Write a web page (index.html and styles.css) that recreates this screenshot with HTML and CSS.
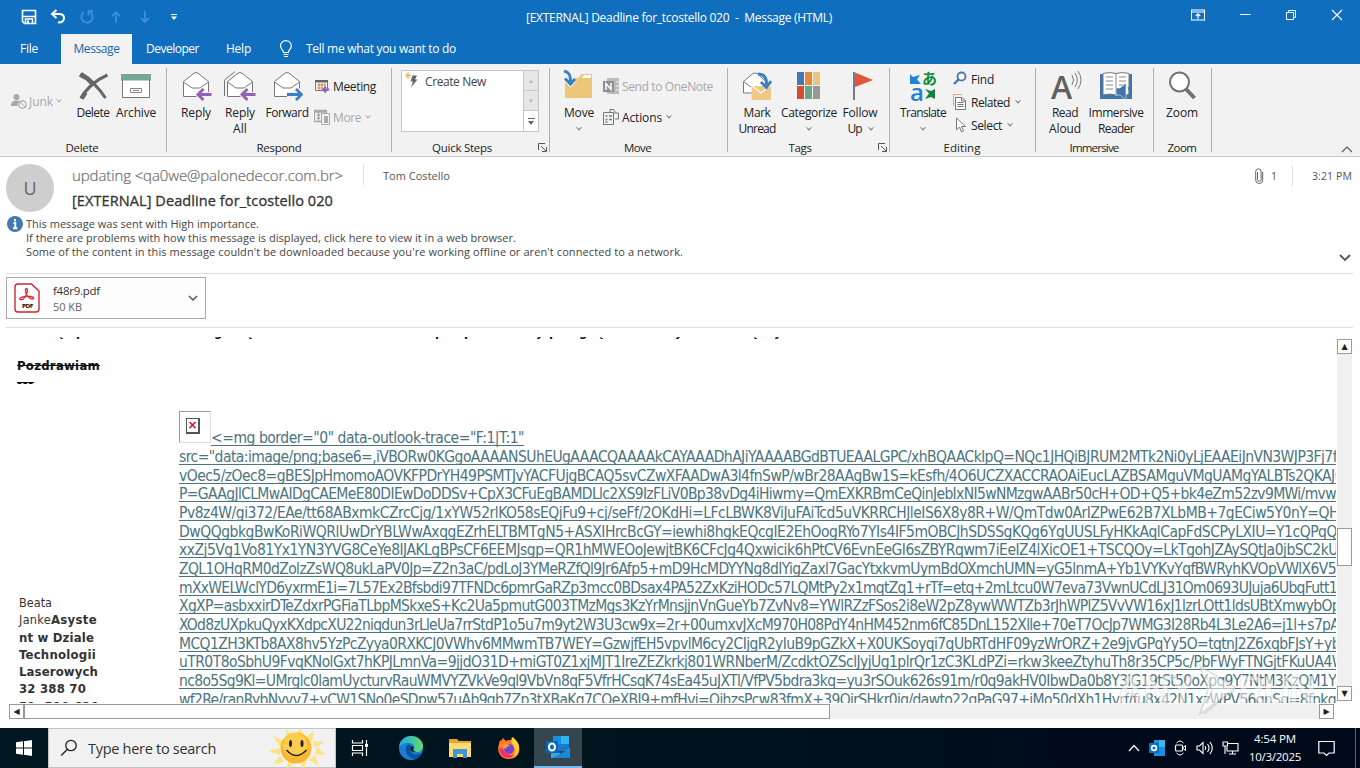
FILE: index.html
```html
<!DOCTYPE html>
<html lang="en">
<head>
<meta charset="utf-8">
<title>[EXTERNAL] Deadline for_tcostello 020 - Message (HTML)</title>
<link rel="stylesheet" href="styles.css">
</head>
<body>
<div class="screen">
  <header class="titlebar">
    <div class="quick">
      <svg width="16" height="16" viewBox="0 0 16 16"><path d="M1.500 1.500h13v13h-11l-2-2z" fill="none" stroke="#fff" stroke-width="1.600"/><path d="M2 7.500h12M4.500 14v-4h7v4" fill="none" stroke="#fff" stroke-width="1.500"/><path d="M6 11.500h2v2.500h-2z" fill="#fff"/></svg>
      <svg width="16" height="16" viewBox="0 0 16 16"><path d="M6.500 1L2 5l4.500 4M2.500 5h6.500c3.500 0 5 1.700 5 4s-1.500 4.500-6 4.500" fill="none" stroke="#fff" stroke-width="2"/></svg>
      <svg class="dim" width="16" height="16" viewBox="0 0 16 16"><path d="M5 3a5.700 5.700 0 1 0 6 0M14 2h-4.500v4.500" fill="none" stroke="#52a3e6" stroke-width="1.800"/></svg>
      <svg class="dim" width="16" height="16" viewBox="0 0 16 16"><path d="M8 14V3M4 7l4-4 4 4" fill="none" stroke="#52a3e6" stroke-width="1.800"/></svg>
      <svg class="dim" width="16" height="16" viewBox="0 0 16 16"><path d="M8 2v11M4 9l4 4 4-4" fill="none" stroke="#52a3e6" stroke-width="1.800"/></svg>
      <svg width="16" height="16" viewBox="0 0 16 16"><path d="M5 5.500h6" stroke="#fff"/><path d="M5 7.500h6l-3 3.500z" fill="#fff"/></svg>
    </div>
    <div class="window-title"><span data-w="306">[EXTERNAL] Deadline for_tcostello 020&nbsp; -&nbsp; Message (HTML)</span></div>
    <div class="window-buttons">
      <svg width="14" height="12" viewBox="0 0 14 12"><path d="M.5 1h13v10H.5zM.5 3h13M7 10V5M4.700 7L7 4.800 9.300 7" fill="none" stroke="#fff" stroke-width="1.100"/></svg>
      <svg width="12" height="12" viewBox="0 0 12 12"><path d="M1 5.500h10.500" stroke="#fff"/></svg>
      <svg width="12" height="12" viewBox="0 0 12 12"><path d="M1.500 3.500h7v7h-7zM3.500 3.500v-2h7v7h-2" fill="none" stroke="#fff"/></svg>
      <svg width="12" height="12" viewBox="0 0 12 12"><path d="M1 1l10 10M11 1L1 11" stroke="#fff" stroke-width="1.100"/></svg>
    </div>
  </header>

  <nav class="tabs">
    <div class="tab file"><span data-w="18">File</span></div>
    <div class="tab on"><span data-w="46">Message</span></div>
    <div class="tab dev"><span data-w="53">Developer</span></div>
    <div class="tab help"><span data-w="25">Help</span></div>
    <div class="tell">
      <svg width="14" height="18" viewBox="0 0 14 18"><path d="M4.500 12.500c0-2.500-3-3.500-3-6.500a5.400 5.400 0 0 1 10.800 0c0 3-3 4-3 6.500zM4.500 14.500h5M5 16.500h4" fill="none" stroke="#fff" stroke-width="1.200"/></svg>
      <span data-w="150">Tell me what you want to do</span>
    </div>
  </nav>

  <section class="ribbon">
    <div class="group g-delete">
      <div class="tools">
        <div class="small junk off"><svg width="16" height="16" viewBox="0 0 16 16"><circle cx="5.500" cy="4" r="3" fill="#a9a9a9"/><path d="M0 13c0-4 2-5.500 5.500-5.500 1.500 0 2.500.3 3.300.8A5 5 0 0 0 6.500 13z" fill="#a9a9a9"/><circle cx="11.500" cy="11.500" r="3.700" fill="#f2f2f2" stroke="#a9a9a9" stroke-width="1.200"/><path d="M9 9l5 5" stroke="#a9a9a9"/></svg><span data-w="24">Junk</span><i class="chev"></i></div>
        <div class="big w42"><svg width="32" height="32" viewBox="0 0 32 32"><path d="M4.500 3.500c9 6 17 14 24 24.500M30.500 5C19 10 9.500 18 4 28.500" fill="none" stroke="#666" stroke-width="3"/><path d="M3 4.500l7.500 4L17 15M4.500 28.500l4-6" fill="none" stroke="#666" stroke-width="4.600"/></svg><span data-w="33">Delete</span></div>
        <div class="big w44"><svg width="32" height="32" viewBox="0 0 32 32"><path d="M2.500 9v18.500h27V9" fill="#fff" stroke="#777"/><path d="M1 4h30v6.500H1z" fill="#74a892"/><path d="M10.500 18.500h11v4h-11zM13 20.500h6" fill="none" stroke="#888"/></svg><span data-w="40">Archive</span></div>
      </div>
      <div class="name"><span data-w="33">Delete</span></div>
    </div>
    <div class="group g-respond">
      <div class="tools">
        <div class="big w44"><svg width="32" height="32" viewBox="0 0 32 32"><path d="M3.500 11.500L14 3.200q2-1.400 4 0l10.500 8.300V26.500h-25z" fill="#fff" stroke="#777"/><path d="M3.500 12l8.500 6h8l8.500-6" fill="none" stroke="#777"/><path d="M31 24.500H19M24 18.500l-6 6 6 6" fill="none" stroke="#f2f2f2" stroke-width="5"/><path d="M31.500 24.500H18.500M23.500 19l-5.500 5.500 5.500 5.500" fill="none" stroke="#9161b8" stroke-width="2.800"/></svg><span data-w="30">Reply</span></div>
        <div class="big w44"><svg width="32" height="32" viewBox="0 0 32 32"><path d="M.5 26V10L11 1.500" fill="none" stroke="#777"/><path d="M3.500 11.500L14 3.200q2-1.400 4 0l10.500 8.300V26.500h-25z" fill="#fff" stroke="#777"/><path d="M3.500 12l8.500 6h8l8.500-6" fill="none" stroke="#777"/><path d="M31 24.500H19M24 18.500l-6 6 6 6" fill="none" stroke="#f2f2f2" stroke-width="5"/><path d="M31.500 24.500H18.500M23.500 19l-5.500 5.500 5.500 5.500" fill="none" stroke="#9161b8" stroke-width="2.800"/></svg><span data-w="30">Reply</span><span data-w="14">All</span></div>
        <div class="big w50"><svg width="32" height="32" viewBox="0 0 32 32"><path d="M3.500 11.500L14 3.200q2-1.400 4 0l10.500 8.300V26.500h-25z" fill="#fff" stroke="#777"/><path d="M3.500 12l8.500 6h8l8.500-6" fill="none" stroke="#777"/><path d="M16 24.500h13M25 18.500l6 6-6 6" fill="none" stroke="#f2f2f2" stroke-width="5"/><path d="M16 24.500h14M25 19l5.500 5.500-5.500 5.500" fill="none" stroke="#3f7fc1" stroke-width="2.800"/></svg><span data-w="43">Forward</span></div>
        <div class="stack two">
          <div class="small"><svg width="16" height="16" viewBox="0 0 16 16"><path d="M1.500 2.500h12v10h-12z" fill="#fff" stroke="#777"/><path d="M1 2h13v2.500H1z" fill="#666"/><path d="M3 7h8M3 10h5M5 5v7M8 5v7M11 5v3" stroke="#c98145"/><path d="M15.500 11.500H9M12 8.500l-3 3 3 3" fill="none" stroke="#9161b8" stroke-width="1.800"/></svg><span data-w="43">Meeting</span></div>
          <div class="small off"><svg width="16" height="16" viewBox="0 0 16 16"><path d="M.5 1.500h12v11H.5zM1 3h11M3 6h3M3 9h3M4.500 3v9" fill="none" stroke="#aaa" stroke-width="1.300"/><path d="M7.500 4.500h8v11h-8z" fill="#f2f2f2" stroke="#aaa"/><path d="M10 7h4v7h-4z" fill="#aaa"/></svg><span data-w="28">More</span><i class="chev"></i></div>
        </div>
      </div>
      <div class="name"><span data-w="45">Respond</span></div>
    </div>
    <div class="group g-quick">
      <div class="tools">
        <div class="gallery">
          <div class="gallery-item"><svg width="16" height="16" viewBox="0 0 16 16"><path d="M3 0v7M0 3.500h6.500M.8 1l4.600 5M5.400 1L.8 6" stroke="#e5a54b" stroke-width=".8"/><path d="M7.500 3.500H12l-2 4h2.500L6 15.500l2-6H5.500z" fill="#666"/></svg><span data-w="61">Create New</span></div>
          <div class="gallery-scroll"><b>▲</b><b>▼</b><b class="more"></b></div>
        </div>
      </div>
      <div class="name"><span data-w="60">Quick Steps</span></div>
      <svg class="launch" width="9" height="9" viewBox="0 0 9 9"><path d="M.5 7V.5H7M3 3l5 5M8.500 4v4.500H4" fill="none" stroke="#555"/></svg>
    </div>
    <div class="group g-move">
      <div class="tools">
        <div class="big w44"><svg width="32" height="32" viewBox="0 0 32 32"><path d="M2 8h13l4-4h10v8H2z" fill="#ecc679"/><path d="M19 8l2-3h7v3z" fill="#fff"/><path d="M2 8h27v20H2z" fill="#ecc679"/><path d="M1 1c5 1 7 4 6.500 12M2 8.500l5.500 5.500L12 9" fill="none" stroke="#f2f2f2" stroke-width="5"/><path d="M1 1c5 1 7 4 6.500 12M2 8.500l5.500 5.500L12 9" fill="none" stroke="#3f7fc1" stroke-width="3"/></svg><span data-w="30">Move</span><i class="chev"></i></div>
        <div class="stack two">
          <div class="small off"><svg width="16" height="16" viewBox="0 0 16 16"><path d="M4 0h12v16H4z" fill="#bbb"/><path d="M13 4h3M13 8h3M13 12h3" stroke="#eee"/><path d="M0 3h11v11H0z" fill="#8f8f8f"/><path d="M3 12V5.500l5 6V5" fill="none" stroke="#fff" stroke-width="1.500"/></svg><span data-w="91">Send to OneNote</span></div>
          <div class="small"><svg width="16" height="16" viewBox="0 0 16 16"><path d="M.5 3.500h10v12H.5zM7 3V.5h4M11 4h4.500v6H12M10 .5l3 3" fill="none" stroke="#777"/><path d="M2.500 7h2M6 7h3M2.500 10.500h2M6 10.500h3M2.500 13h2" stroke="#777" stroke-width="1.300"/></svg><span data-w="40">Actions</span><i class="chev"></i></div>
        </div>
      </div>
      <div class="name"><span data-w="27">Move</span></div>
    </div>
    <div class="group g-tags">
      <div class="tools">
        <div class="big w44"><svg width="32" height="32" viewBox="0 0 32 32"><path d="M2.500 11.500L12 3.500q2-1 4 0l9 8V23h-22.500z" fill="#fff" stroke="#777"/><path d="M3 12l7 5" stroke="#777"/><path d="M10.500 16h19.500V30H10.500z" fill="#eec983"/><path d="M10 15l10 8 10-8" fill="none" stroke="#fff" stroke-width="1.200"/><path d="M17 4c7 0 9 5 8.500 12M20 12l5.500 5.500L30 11" fill="none" stroke="#3f7fc1" stroke-width="3"/></svg><span data-w="27">Mark</span><span data-w="37">Unread</span></div>
        <div class="big w60"><svg width="32" height="32" viewBox="0 0 32 32"><path d="M4 2h7v13H4z" fill="#4478b5"/><path d="M12 2h7v13h-7z" fill="#e48839"/><path d="M20 2h7v13h-7z" fill="#e9c483"/><path d="M4 16h7v13H4z" fill="#d84b31"/><path d="M12 16h7v13h-7z" fill="#69a389"/><path d="M20 16h7v13h-7z" fill="#979797"/></svg><span data-w="56">Categorize</span><i class="chev"></i></div>
        <div class="big w42"><svg width="32" height="32" viewBox="0 0 32 32"><path d="M10 2v28" stroke="#7b7b7b" stroke-width="2"/><path d="M11 2.500L29 10 11 17z" fill="#e35637"/></svg><span data-w="35">Follow</span><div class="row"><span data-w="14">Up</span><i class="chev"></i></div></div>
      </div>
      <div class="name"><span data-w="23">Tags</span></div>
      <svg class="launch" width="9" height="9" viewBox="0 0 9 9"><path d="M.5 7V.5H7M3 3l5 5M8.500 4v4.500H4" fill="none" stroke="#555"/></svg>
    </div>
    <div class="group g-edit">
      <div class="tools">
        <div class="big w52"><div class="translate"><svg width="32" height="32" viewBox="0 0 32 32"><path d="M3 4l3 3 7-2-3 4.500 4 4.500H3z" fill="#1c83dc"/><path d="M28 29V19l-4 2-6-2 4 4.500-4 5.500 6-2z" fill="#17803d"/></svg><b>a</b><em>あ</em></div><span data-w="46">Translate</span><i class="chev"></i></div>
        <div class="stack three">
          <div class="small"><svg width="16" height="16" viewBox="0 0 16 16"><circle cx="8.500" cy="5.500" r="4" fill="#fff" stroke="#4478b5" stroke-width="1.800"/><path d="M5.500 8.500L1 13" stroke="#4478b5" stroke-width="2.400"/></svg><span data-w="23">Find</span></div>
          <div class="small"><svg width="16" height="16" viewBox="0 0 16 16"><path d="M.5 12V.5H9" fill="none" stroke="#e9a86a"/><path d="M2.500 3.500h6l4 3v9h-10zM8.500 3.500v3.500h4M4.500 8.500h6M4.500 10.500h6M4.500 12.500h6" fill="#fff" stroke="#777"/></svg><span data-w="39">Related</span><i class="chev"></i></div>
          <div class="small"><svg width="16" height="16" viewBox="0 0 16 16"><path d="M3.500 1v12l3-3 2 5 2-1-2-4.500h4z" fill="#fff" stroke="#777"/></svg><span data-w="31">Select</span><i class="chev"></i></div>
        </div>
      </div>
      <div class="name"><span data-w="37">Editing</span></div>
    </div>
    <div class="group g-immersive">
      <div class="tools">
        <div class="big w48"><div class="aloud"><b>A</b><svg width="11" height="20" viewBox="0 0 11 20"><path d="M1 5q3 5 0 10M4 3q4.500 7 0 14M7 1q6 9 0 18" fill="none" stroke="#777"/></svg></div><span data-w="26">Read</span><span data-w="32">Aloud</span></div>
        <div class="big w54"><svg width="32" height="32" viewBox="0 0 32 32"><path d="M0 4h3v20h11l2 2 2-2h11V4h3v25H0z" fill="#3f76b0"/><path d="M3 3.500q7-2 13 0 6-2 13 0V25q-7-2-13 0-6-2-13 0z" fill="#fff" stroke="#777"/><path d="M16 4v20M6 7h7M6 11h7M6 15h7M6 19h7M19 7h7M19 11h7M19 15h4" stroke="#888"/><path d="M16 18h4l6-5v17l-6-5h-4z" fill="#3f76b0" stroke="#f2f2f2" stroke-width=".6"/><path d="M28 17q3 4.500 0 9M30 14q4 7 0 15" fill="none" stroke="#3f76b0" stroke-width="1.200"/></svg><span data-w="55">Immersive</span><span data-w="36">Reader</span></div>
      </div>
      <div class="name"><span data-w="49">Immersive</span></div>
    </div>
    <div class="group g-zoom">
      <div class="tools">
        <div class="big w44"><svg width="32" height="32" viewBox="0 0 32 32"><circle cx="13.500" cy="12" r="9.500" fill="#fff" stroke="#707070" stroke-width="2"/><path d="M20 19l8.500 9" stroke="#707070" stroke-width="4"/></svg><span data-w="32">Zoom</span></div>
      </div>
      <div class="name"><span data-w="29">Zoom</span></div>
    </div>
    <svg class="collapse" width="12" height="7" viewBox="0 0 12 7"><path d="M1 6l5-5 5 5" fill="none" stroke="#555" stroke-width="1.100"/></svg>
  </section>

  <section class="head">
    <div class="head-main">
      <div class="avatar">U</div>
      <div class="who">
        <div class="from"><span class="sender" data-w="271">updating &lt;qa0we@palonedecor.com.br&gt;</span><i class="bar"></i><span class="to" data-w="67">Tom Costello</span></div>
        <div class="subject"><span data-w="261">[EXTERNAL] Deadline for_tcostello 020</span></div>
      </div>
      <div class="meta">
        <svg width="9" height="16" viewBox="0 0 9 16"><path d="M2.500 4v7.500a1.800 1.800 0 0 0 3.600 0V3.500a2.700 2.700 0 0 0-5.400 0V12a3.500 3.500 0 0 0 7 0V4" fill="none" stroke="#666"/></svg>
        <span>1</span><i class="bar"></i><span data-w="40">3:21 PM</span>
      </div>
    </div>
    <div class="info">
      <svg width="16" height="16" viewBox="0 0 16 16"><circle cx="8" cy="8" r="8" fill="#4379b1"/><path d="M8 3v2.200M6.500 7h1.800v5M6 12.200h4.300" fill="none" stroke="#fff" stroke-width="1.900"/></svg>
      <div class="info-lines">
        <div><span data-w="233">This message was sent with High importance.</span></div>
        <div><span data-w="490">If there are problems with how this message is displayed, click here to view it in a web browser.</span></div>
        <div><span data-w="657">Some of the content in this message couldn't be downloaded because you're working offline or aren't connected to a network.</span></div>
      </div>
      <svg class="expand" width="12" height="8" viewBox="0 0 12 8"><path d="M1 1l5 5 5-5" fill="none" stroke="#555" stroke-width="1.800"/></svg>
    </div>
  </section>

  <section class="attachments">
    <div class="attachment">
      <svg width="26" height="30" viewBox="0 0 26 30"><path d="M4 1h13.500L25 8v18q0 3-3 3H4q-3 0-3-3V4q0-3 3-3z" fill="#fff" stroke="#c8282d" stroke-width="1.400"/><path d="M6 16.500c-1.500-2 6-4 11-3 4 1 3 3 .5 2.300-3-1-5.500-4-6-8-.3-3 2.200-3 2 0-.3 3.500-4 10.500-7.500 8.700z" fill="none" stroke="#d5363a" stroke-width="1.400"/></svg>
      <div class="att-text"><span data-w="47">f48r9.pdf</span><span class="size" data-w="29">50 KB</span></div>
      <svg width="10" height="7" viewBox="0 0 10 7"><path d="M1 1l4 4 4-4" fill="none" stroke="#555" stroke-width="1.500"/></svg>
      <b class="pdf" data-w="11">PDF</b>
    </div>
  </section>

  <main class="reader">
    <div class="mail-row">
      <div class="mail">
        <div class="cut-line"><b class="c1">ę</b><b class="c2">p</b><b class="c3">g</b><b class="c4">ę</b><b class="c5">p</b><b class="c6">p</b><b class="c7">y</b><b class="c8">p</b><b class="c9">g</b><b class="c10">ę</b><b class="c11">y</b><b class="c12">ę</b><b>y</b></div>
        <div class="bye"><s data-w="83">Pozdrawiam</s></div>
        <div class="bye dash"><s data-w="17">---</s></div>
        <div class="cols">
          <div class="sign">
            <div><span data-w="33">Beata</span></div>
            <div><span data-w="78">Janke<b>Asyste</b></span></div>
            <div><b data-w="75">nt w Dziale</b></div>
            <div><b data-w="77">Technologii</b></div>
            <div><b data-w="79">Laserowych</b></div>
            <div><b data-w="67">32 388 70</b></div>
            <div><b data-w="80">51, 510 620</b></div>
          </div>
          <div class="link">
            <div class="first"><span class="broken"><i>×</i></span><a data-w="313">&lt;=mg border="0" data-outlook-trace="F:1|T:1"</a></div>
            <div><a data-w="1158">src="data:image/png;base6=,iVBORw0KGgoAAAANSUhEUgAAACQAAAAkCAYAAADhAJiYAAAABGdBTUEAALGPC/xhBQAACklpQ=NQc1JHQiBJRUM2MTk2Ni0yLjEAAEiJnVN3WJP3Fj7f</a></div>
            <div><a data-w="1164">vOec5/zOec8=gBESJpHmomoAOVKFPDrYH49PSMTJvYACFUjgBCAQ5svCZwXFAADwA3l4fnSwP/wBr28AAgBw1S=kEsfh/4O6UCZXACCRAOAiEucLAZBSAMguVMgUAMgYALBTs2QKAJ0</a></div>
            <div><a data-w="1157">P=GAAgJlCLMwAIDgCAEMeE80DIEwDoDDSv+CpX3CFuEgBAMDLlc2XS9IzFLiV0Bp38vDg4iHiwmy=QmEXKRBmCeQinJebIxNI5wNMzgwAABr50cH+OD+Q5+bk4eZm52zv9MWi/mvw</a></div>
            <div><a data-w="1160">Pv8z4W/gi372/EAe/tt68ABxmkCZrcCjg/1xYW52rlKO58sEQjFu9+cj/seFf/2OKdHi=LFcLBWK8ViJuFAiTcd5uVKRRCHJleIS6X8y8R+W/QmTdw0ArIZPwE62B7XLbMB+7gECiw5Y0nY=QH</a></div>
            <div><a data-w="1158">DwQQgbkgBwKoRiWQRlUwDrYBLWwAxqgEZrhELTBMTgN5+ASXIHrcBcGY=iewhi8hgkEQcgIE2EhOogRYo7YIs4IF5mOBCJhSDSSgKQg6YgUUSLFyHKkAqlCapFdSCPyLXIU=Y1cQPqQ</a></div>
            <div><a data-w="1159">xxZj5Vg1Vo81Yx1YN3YVG8CeYe8IJAKLgBPsCF6EEMJsgp=QR1hMWEOoJewjtBK6CFcJg4Qxwicik6hPtCV6EvnEeGI6sZBYRqwm7iEeIZ4lXicOE1+TSCQOy=LkTgohJZAySQtJa0jbSC2kU</a></div>
            <div><a data-w="1157">ZQL1OHqRM0dZolzZsWQ8ukLaPV0Jp=Z2n3aC/pdLoJ3YMeRZfQl9Jr6Afp5+mD9HcMDYYNg8dIYigZaxl7GacYtxkvmUymBdOXmchUMN=yG5lnmA+Yb1VYKvYqfBWRyhKVOpVWlX6V5</a></div>
            <div><a data-w="1158">mXxWELWclYD6yxrmE1i=7L57Ex2Bfsbdi97TFNDc6pmrGaRZp3mcc0BDsax4PA52ZxKziHODc57LQMtPy2x1mqtZq1+rTf=etq+2mLtcu0W7eva73VwnUCdLJ31Om0693UJuja6UbqFutt1</a></div>
            <div><a data-w="1161">XgXP=asbxxirDTeZdxrPGFiaTLbpMSkxeS+Kc2Ua5pmutG003TMzMgs3KzYrMnsjjnVnGueYb7ZvNv8=YWlRZzFSos2i8eW2pZ8ywWWTZb3rJhWPlZ5VvVW16xJ1lzrLOtt1ldsUBtXmwybOp</a></div>
            <div><a data-w="1160">XOd8zUXpkuQyxKXdpcXU22niqdun3rLleUa7rrStdP1o5u7m9yt2W3U3cw9x=2r+00umxvJXcM970H08PdY4nHM452nm6fC85DnL152Xlle+70eT7OcJp7WMG3I28Rb4L3Le2A6=j1l+s7pA</a></div>
            <div><a data-w="1161">MCQ1ZH3KTb8AX8hv5YzPcZyya0RXKCJ0VWhv6MMwmTB7WEY=GzwjfEH5vpvlM6cy2CIjgR2yIuB9pGZkX+X0UKSoyqi7qUbRTdHF09yzWrORZ+2e9jvGPqYy5O=tqtnJ2Z6xqbFJsY+yb</a></div>
            <div><a data-w="1166">uTR0T8oSbhU9FvqKNolGxt7hKPJLmnVa=9jjdO31D+miGT0Z1xjMJT1IreZEZkrkj801WRNberM/ZcdktOZSclJyjUg1plrQr1zC3KLdPZi=rkw3keeZtyhuTh8r35CP5c/PbFWyFTNGjtFKuUA4W</a></div>
            <div><a data-w="1157">nc8o5Sg9Kl=UMrglc0lamUycturvRauWMVYZVkVe9ql9VbVn8qF5VfrHCsqK74sEa45uJXTl/VfPV5bdra3kq=yu3rSOuk626s91m/r0q9akHV0IbwDa0b8Y3lG19tSt50oXpq9Y7NtM3KzQM1Y</a></div>
            <div><a data-w="1157">wf2Re/ranRybNyvv7+yCW1SNo0eSDpw57uAb9gb7Zp3tXBaKg7CQeXBJ9+mfHvj=QihzsPcw83fmX+39QjrSHkr0jq/dawto22gPaG97+jMo50dXh1Hvrf/fu8x42N1xzWPV56gnSg=8fnkg</a></div>
          </div>
        </div>
      </div>
      <div class="vscroll"><b>▲</b><i></i><b>▼</b></div>
    </div>
    <div class="hscroll"><b>◀</b><i></i><b>▶</b></div>
    <div class="watermark"><span data-w="78">ANY</span><svg width="48" height="56" viewBox="0 0 48 56"><path d="M8 4l36 22L8 52l8-24zM14 13l6 15-5 14M12 52l30-24" fill="#fff8" stroke="#8884" stroke-width="1.500"/></svg><span data-w="76">RUN</span></div>
  </main>

  <footer class="taskbar">
    <div class="start"><svg width="16" height="16" viewBox="0 0 16 16"><path d="M0 2.300L7 1.300v6.300H0zM8 1.200L16 0v7.600H8zM0 8.500h7v6.300l-7-1zM8 8.500h8V16l-8-1.200z" fill="#fff"/></svg></div>
    <div class="search">
      <svg width="18" height="18" viewBox="0 0 18 18"><circle cx="11" cy="6.500" r="5.200" fill="none" stroke="#222" stroke-width="1.300"/><path d="M7.200 10.500L1.200 16.500" stroke="#222" stroke-width="1.300"/></svg>
      <span data-w="128">Type here to search</span>
      <svg class="sun" width="58" height="40" viewBox="0 0 58 40"><g fill="#ffe37d"><path d="M18 1l8 8-6 4zM32 0l5 10-9-2zM46 3l-2 11-6-5zM56 14l-9 6-2-7zM58 27l-11-1 2-7zM51 38l-10-6 6-5zM36 41l-5-9 8-1zM18 41l3-10 6 4zM5 36l7-8 4 6zM0 23l12-3v7zM5 8l11 5-4 6z"/></g><circle cx="28" cy="20" r="15.500" fill="#f7b733"/><circle cx="27" cy="17" r="12" fill="#ffcd4e"/><ellipse cx="22.500" cy="15.500" rx="1.500" ry="3.500" fill="#222"/><ellipse cx="34" cy="15.500" rx="1.500" ry="3.500" fill="#222"/><path d="M18.500 22q9.500 11 20 0" fill="none" stroke="#222" stroke-width="1.500"/></svg>
    </div>
    <div class="app"><svg width="18" height="18" viewBox="0 0 18 18"><path d="M1.500 1v3h10V1M1.500 6.500h10v5h-10zM1.500 17v-3h10v3M15.500 1v4M15.500 8.500V17" fill="none" stroke="#fff" stroke-width="1.200"/><path d="M14 5h3v3h-3z" fill="#fff"/></svg></div>
    <div class="app edge"><svg width="24" height="24" viewBox="0 0 24 24"><defs><linearGradient id="e1" x1="0" x2="1"><stop stop-color="#22a7e8"/><stop offset="1" stop-color="#61db6c"/></linearGradient></defs><circle cx="12" cy="12" r="12" fill="#1680d8"/><path d="M0 11C1 4 6 0 12 0c7 0 12 5 12 10 0 4-3 6-6 6-4 0-4-2-3-3 1-3-1-6-5-6C5 7 1 9 0 11z" fill="url(#e1)"/><path d="M9 8.500C4 12 7 22 16 23c3-1 5-3 6.500-6-3 2-8 2-10-.5-2-2.500-1-4-.5-5C12 9 11 8 9 8.500z" fill="#0c519d"/><path d="M12 11c1-1.500 3-.5 2.500 1.500-1 2 .5 3 2.500 3.200-3 1-7-1-5-4.700z" fill="#001620"/></svg></div>
    <div class="app folder"><svg width="22" height="20" viewBox="0 0 22 20"><path d="M0 1h8l2 2h12v16H0z" fill="#e6a629"/><path d="M0 5h22v14H0z" fill="#ffda70"/><path d="M4 11h14v9h-4v-4H8v4H4z" fill="#3c97d4"/></svg></div>
    <div class="app fox"><svg width="24" height="24" viewBox="0 0 24 24"><path d="M4 5l2-3 3 3c2-1 4-1 6-1l1-3c2 2 4 4 5 7 4 8-1 15-9 15S-1 16 2 8l1-4z" fill="#ff7b27"/><path d="M15 1c3 2 5 4 6.500 7 2 7-2 13-7.500 14 5-4 5-9 2-13-2-3-2-5-1-8z" fill="#ffd23c"/><path d="M2 12c0 8 9 13 16 7-5 1-11-1-12-6z" fill="#f12c68"/><circle cx="12" cy="13" r="5" fill="#7444d3"/><path d="M5 8c3-1 7 0 8 2-3 0-4 1-4 3-2-1-4-2-4-5z" fill="#ff9d2c"/></svg></div>
    <div class="app active"><svg width="26" height="24" viewBox="0 0 26 24"><path d="M8 1h16v15H8z" fill="#167bce"/><path d="M8 1h8v8H8z" fill="#1492df"/><path d="M16 1h8v8h-8z" fill="#32b6ed"/><path d="M6 13l10 6 9-6v10H6z" fill="#35a8e6"/><path d="M7 23L25 14v9z" fill="#168ad9"/><path d="M1 6h12v12H1z" fill="#0866b6"/><ellipse cx="7" cy="12" rx="3" ry="3.500" fill="none" stroke="#fff" stroke-width="2"/></svg></div>
    <div class="tray">
      <svg width="12" height="8" viewBox="0 0 12 8"><path d="M1 7l5-5.500L11 7" fill="none" stroke="#fff" stroke-width="1.200"/></svg>
      <svg width="16" height="16" viewBox="0 0 16 16"><path d="M5 0h11v16H5z" fill="#1b91dc"/><path d="M10 0h6v7h-6z" fill="#36b9ef"/><path d="M0 3h10v10H0z" fill="#0b6fc0"/><circle cx="5" cy="8" r="2.400" fill="none" stroke="#fff" stroke-width="1.600"/></svg>
      <svg width="13" height="16" viewBox="0 0 13 16"><path d="M2.500 3q3.500-4 7 0M2.500 13q3.500 4 7 0" fill="none" stroke="#fff"/><rect x="1.500" y="5" width="7" height="6" rx="1" fill="none" stroke="#fff" stroke-width="1.200"/><path d="M8.500 8l3-2.500v5z" fill="none" stroke="#fff"/></svg>
      <svg width="17" height="14" viewBox="0 0 17 14"><path d="M1 5h2.500L7 1.500v11L3.500 9H1zM9 5q1.500 2 0 4M11.500 3q3 4 0 8M14 1q4.500 6 0 12" fill="none" stroke="#fff" stroke-width="1.100"/></svg>
      <svg width="17" height="14" viewBox="0 0 17 14"><path d="M6 2.500h10v7.500H5V6M10.500 10v3M7 13h7M1 1h4.500v4H1zM3 5v8" fill="none" stroke="#fff" stroke-width="1.100"/></svg>
      <div class="clock"><span data-w="42">4:54 PM</span><span data-w="52">10/3/2025</span></div>
      <svg width="17" height="17" viewBox="0 0 17 17"><path d="M.8 1.500h15.400v11.500H11L8.500 15.500 6 13H.8z" fill="none" stroke="#fff" stroke-width="1.200"/></svg>
      <i class="peek"></i>
    </div>
  </footer>
</div>
<script src="fit.js"></script>
</body>
</html>
```
FILE: fit.js
```js
// Tracks each label in or out so that it takes up its design width.
document.querySelectorAll('[data-w]').forEach(function (el) {
  var want = parseFloat(el.dataset.w);
  var range = document.createRange();
  range.selectNodeContents(el);
  var have = range.getBoundingClientRect().width;
  el.style.letterSpacing = (want - have) / el.textContent.length + 'px';
});
```
FILE: styles.css
```css
* { box-sizing: border-box; }
body { margin: 0; font-family: "Open Sans", "Noto Sans", sans-serif; font-size: 12px; color: #222; }
svg { display: block; flex: none; }
span, a, s, b { white-space: nowrap; }
i { font-style: normal; }
.screen { width: 1360px; height: 768px; display: flex; flex-direction: column; background: #fff; overflow: hidden; }

.titlebar { height: 34px; background: #106ebe; color: #fff; display: grid; grid-template-columns: 526px 1fr auto; flex: none; }
.quick { display: flex; gap: 13px; padding: 9px 0 0 21px; }
.dim { opacity: .65; }
.window-title { padding-top: 10px; line-height: 16px; }
.window-buttons { display: flex; gap: 34px; padding: 9px 17px 0 0; }

.tabs { height: 30px; background: #106ebe; color: #fff; display: flex; flex: none; line-height: 30px; }
.tab { display: flex; justify-content: center; }
.file { width: 61px; padding-right: 3px; }
.on { width: 71px; background: #f2f2f2; color: #1766b0; }
.dev { width: 81px; }
.help { width: 51px; }
.tell { display: flex; align-items: center; gap: 13px; padding-left: 15px; }

.ribbon { height: 93px; flex: none; background: #f2f2f2; border-bottom: 1px solid #c8c8c8; display: flex; padding-top: 4px; position: relative; }
.group { height: 84px; border-right: 1px solid #b1b1b1; display: flex; flex-direction: column; position: relative; }
.tools { height: 72px; flex: none; padding-top: 2px; display: flex; }
.name { text-align: center; line-height: 16px; font-size: 11.500px; }
.g-delete { width: 167px; padding-left: 8px; }
.g-delete .name { padding-right: 10px; }
.g-respond { width: 225px; padding-left: 7px; }
.g-respond .name { padding-right: 7px; }
.g-quick { width: 158px; padding-left: 9px; }
.g-quick .name { padding-right: 26px; }
.g-move { width: 178px; padding-left: 7px; }
.g-move .name { padding-right: 9px; }
.g-tags { width: 162px; padding-left: 7px; }
.g-tags .name { padding-right: 24px; }
.g-edit { width: 146px; padding-left: 7px; }
.g-edit .name { padding-right: 8px; }
.g-immersive { width: 118px; padding-left: 5px; }
.g-immersive .name { padding-right: 6px; }
.g-zoom { width: 58px; padding-left: 6px; }
.g-zoom .name { padding-right: 7px; }
.big { display: flex; flex-direction: column; align-items: center; line-height: 16px; font-size: 12px; }
.big > svg, .translate, .aloud { margin-bottom: 3px; }
.w42 { width: 42px; } .w44 { width: 44px; } .w48 { width: 48px; } .w50 { width: 50px; }
.w52 { width: 52px; } .w54 { width: 54px; } .w60 { width: 60px; }
.small { display: flex; align-items: center; gap: 3px; height: 16px; }
.small .chev { margin-left: 2px; }
.off { color: #a8a8a8; }
.junk { width: 64px; margin-top: 23px; padding-left: 3px; gap: 2px; }
.stack { display: flex; flex-direction: column; padding-left: 2px; }
.stack.two { gap: 15px; padding-top: 8px; }
.stack.three { gap: 7px; padding: 1px 0 0 4px; }
.stack.three .small { gap: 2px; }
.stack.three .chev { margin-left: 4px; }
.chev { width: 4px; height: 4px; border: solid #777; border-width: 0 1px 1px 0; transform: rotate(45deg) translate(-1px, -1px); flex: none; }
.off .chev { border-color: #aaa; }
.big > .chev { margin-top: 6px; }
.row { display: flex; align-items: center; gap: 7px; }
.gallery { width: 138px; height: 62px; border: 1px solid #c6c6c6; background: #fff; display: flex; justify-content: space-between; }
.gallery-item { display: flex; gap: 4px; padding: 1px 0 0 3px; color: #444; }
.gallery-item span { line-height: 20px; }
.gallery-scroll { width: 15px; display: grid; grid-template-rows: 20px 20px 1fr; }
.gallery-scroll b { background: #e6e6e6; border: 1px solid #c6c6c6; border-width: 0 0 1px 1px; color: #b4b4b4; font-size: 6px; text-align: center; line-height: 20px; }
.gallery-scroll .more { background: #fff; border-bottom: 0; display: flex; flex-direction: column; align-items: center; padding-top: 7px; gap: 2px; }
.more::before { content: ""; width: 7px; height: 1px; background: #666; }
.more::after { content: ""; border: 3.500px solid transparent; border-top: 4px solid #666; border-bottom: 0; }
.launch { position: absolute; right: 2px; bottom: 0; }
.collapse { position: absolute; right: 7px; bottom: 3px; }
.translate { width: 32px; height: 32px; position: relative; font-family: "Open Sans", "Noto Sans CJK JP", sans-serif; }
.translate b { position: absolute; left: 3px; top: 13px; font-size: 24px; line-height: 18px; color: #1c83dc; font-weight: 600; }
.translate em { position: absolute; left: 15px; top: 1px; font-size: 15px; line-height: 15px; color: #128b38; font-style: normal; font-weight: 700; }
.aloud { width: 32px; height: 32px; display: flex; padding-left: 2px; }
.aloud b { font-size: 32px; line-height: 34px; width: 20px; color: #606060; font-family: "Open Sans", sans-serif; font-weight: 600; }

.head { height: 116px; flex: none; padding: 7px 7px 0 6px; color: #444; }
.head-main { height: 53px; display: flex; }
.avatar { width: 48px; height: 48px; border-radius: 50%; background: #cecece; color: #666; font-size: 18px; line-height: 48px; text-align: center; }
.who { padding-left: 18px; flex: 1; }
.from { display: flex; align-items: center; height: 23px; }
.sender { font-size: 15px; line-height: 20px; margin-top: -2px; color: #6b6b6b; font-weight: 300; width: 271px; -webkit-text-stroke: .2px; }
.bar { width: 1px; height: 20px; background: #dedede; margin: -2px 19px 0 20px; }
.to { font-size: 11px; color: #555; }
.subject { font-size: 14.500px; line-height: 26px; padding-top: 1px; color: #333; -webkit-text-stroke: .3px; }
.meta { display: flex; align-items: center; height: 23px; font-size: 10.500px; color: #555; gap: 7px; margin-right: 1px; }
.meta .bar { margin: 0 12px 0 8px; }
.info { display: flex; font-size: 11px; line-height: 14px; gap: 3px; padding: 0 2px 0 1px; }
.info > svg { margin-top: -1px; }
.info-lines { flex: 1; }
.info .expand { margin-top: 37px; }

.attachments { margin: 0 7px 0 6px; height: 55px; flex: none; border: solid #dedede; border-width: 1px 0; padding-top: 3px; }
.attachment { width: 200px; height: 42px; border: 1px solid #ababab; background: #fdfdfd; display: flex; align-items: center; padding: 0 7px; position: relative; font-size: 11.500px; color: #333; }
.att-text { flex: 1; padding: 2px 0 0 13px; line-height: 16px; display: flex; flex-direction: column; align-items: flex-start; }
.size { font-size: 11px; color: #666; }
.pdf { position: absolute; left: 15px; top: 24px; font-size: 5.500px; line-height: 8px; color: #111; font-family: "DejaVu Sans", sans-serif; }

.reader { height: 400px; flex: none; padding-top: 9px; position: relative; }
.mail-row { display: flex; height: 366px; }
.mail { width: 1336px; overflow: hidden; padding-left: 17px; font-family: "DejaVu Sans Condensed", "DejaVu Sans", sans-serif; font-stretch: condensed; }
.cut-line { display: flex; height: 3px; font-size: 13px; line-height: 16px; padding-left: 39px; align-items: flex-end; color: #111; }
.cut-line b { flex: none; width: 20px; }
.c2.c2 { width: 138px; } .c3.c3 { width: 31px; } .c4.c4 { width: 190px; } .c5.c5 { width: 29px; } .c6.c6 { width: 72px; }
.c7.c7 { width: 13px; } .c8.c8 { width: 30px; } .c9.c9 { width: 17px; } .c10.c10 { width: 79px; } .c11.c11 { width: 75px; } .c12.c12 { width: 24px; }
.bye { font-size: 13px; line-height: 18px; font-weight: 700; color: #111; margin-top: 17px; }
.dash { margin-top: 0; line-height: 16px; }
.cols { display: flex; margin-top: 20px; }
.sign { width: 162px; flex: none; padding: 183px 0 0 2px; font-size: 12.500px; line-height: 17.300px; color: #333; }
.sign b { font-size: 13px; }
.sign > div { height: 17.300px; }
.link { flex: none; font-size: 15.500px; line-height: 18.670px; color: #4b7380; }
.link > div { height: 18.670px; }
.link a { text-decoration: underline; text-decoration-thickness: 1px; text-underline-offset: 1.500px; text-decoration-skip-ink: none; }
.link .first { height: 37px; display: flex; align-items: flex-end; }
.broken { width: 32px; height: 32px; border: 1px solid #999; border-color: #999 #ddd #ddd #999; display: grid; place-items: center; align-self: flex-start; flex: none; }
.broken i { width: 14px; height: 16px; margin: 0 4px 2px 0; border: 1px solid #555; border-width: 1px 2px 2px 1px; color: #c51026; font: 700 12px/12px "DejaVu Sans", sans-serif; text-align: center; }
.vscroll, .hscroll { background: #f0f0f0; display: flex; }
.vscroll b, .hscroll b { width: 15px; height: 15px; background: #fff; border: 1px solid #999; color: #222; font: 8px/13px "DejaVu Sans", sans-serif; text-align: center; flex: none; }
.vscroll { width: 15px; height: 362px; flex: none; margin: 2px 0 0 1px; flex-direction: column; }
.vscroll i { height: 38px; border: 1px solid #999; background: #fff; margin-top: 174px; margin-bottom: 120px; }
.hscroll { width: 1325px; height: 15px; margin: 1px 0 0 9px; }
.hscroll i { width: 806px; border: 1px solid #999; background: #fff; margin-right: auto; }
.watermark { position: absolute; left: 1116px; top: 334px; display: flex; align-items: center; font: 700 38px/56px "Liberation Sans", sans-serif; color: #fff8; -webkit-text-stroke: 1px #8883; }
.watermark svg { margin: 0 -2px; }

.taskbar { height: 40px; background: linear-gradient(90deg, #001620, #00141e 50%, #000a1b 85%); display: flex; color: #fff; flex: none; }
.start { width: 48px; display: grid; place-items: center; }
.search { width: 288px; background: #f1f1f1; border: 1px solid #c4c4c4; display: flex; align-items: center; padding-left: 11px; color: #333; font-size: 14.500px; gap: 10px; }
.search span { width: 128px; }
.sun { margin-left: 42px; }
.app { width: 48px; display: grid; place-items: center; }
.edge { margin-left: 3px; }
.active { background: #34454d; border-bottom: 2px solid #76b9ed; }
.folder { width: 49px; }
.fox { width: 50px; }
.tray { margin-left: auto; display: flex; align-items: center; font-size: 11.500px; }
.tray > svg { margin-right: 9px; }
.tray > svg:nth-of-type(5) { margin-right: 8px; }
.clock { width: 62px; display: flex; flex-direction: column; align-items: center; line-height: 18px; margin: 0 12px 0 -3px; }
.tray > svg:last-of-type { margin-right: 11px; }
.peek { width: 1px; height: 40px; background: #56616c; margin-left: 9px; margin-right: 4px; }
```
